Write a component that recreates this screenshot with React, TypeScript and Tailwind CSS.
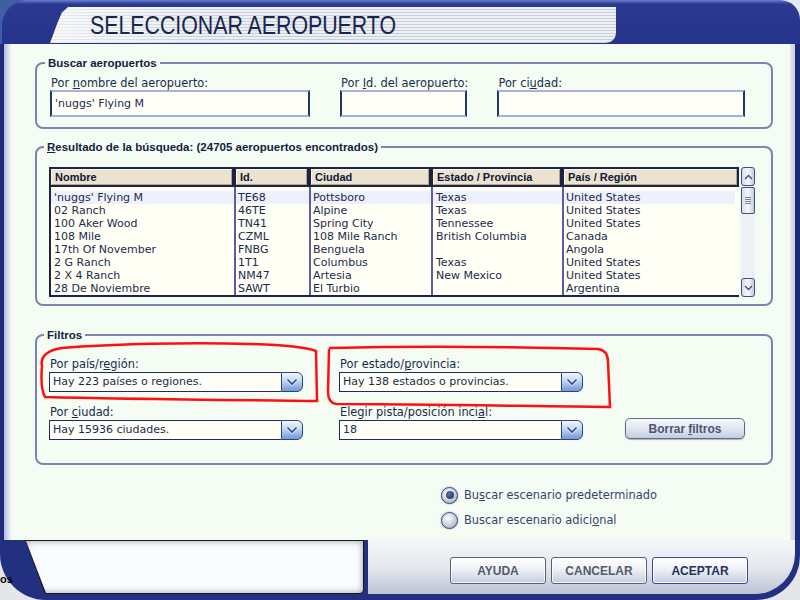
import type { ReactNode } from 'react';

const rows: string[][] = [
  ["'nuggs' Flying M", 'TE68', 'Pottsboro', 'Texas', 'United States'],
  ['02 Ranch', '46TE', 'Alpine', 'Texas', 'United States'],
  ['100 Aker Wood', 'TN41', 'Spring City', 'Tennessee', 'United States'],
  ['108 Mile', 'CZML', '108 Mile Ranch', 'British Columbia', 'Canada'],
  ['17th Of November', 'FNBG', 'Benguela', '', 'Angola'],
  ['2 G Ranch', '1T1', 'Columbus', 'Texas', 'United States'],
  ['2 X 4 Ranch', 'NM47', 'Artesia', 'New Mexico', 'United States'],
  ['28 De Noviembre', 'SAWT', 'El Turbio', '', 'Argentina'],
];

const cols = [
  { title: 'Nombre', w: 'w-[185px]', line: 'border-[#1b2447]', pad: 'pl-[3px]' },
  { title: 'Id.', w: 'w-[75px]', line: 'border-[#5d5c9e]', pad: 'pl-[2px]' },
  { title: 'Ciudad', w: 'w-[122px]', line: 'border-[#5d5c9e]', pad: 'pl-[2px]' },
  { title: 'Estado / Provincia', w: 'w-[131px]', line: 'border-[#5d5c9e]', pad: 'pl-[3px]' },
  { title: 'País / Región', w: 'w-[177px]', line: 'border-[#5d5c9e]', pad: 'pl-[2px]' },
];

function Legend({ children }: { children: ReactNode }) {
  return (
    <legend className="ml-[-5px] px-[3px] font-['Liberation_Sans',Arial,sans-serif] font-bold text-[11.5px] leading-[14px] text-[#14213f]">
      {children}
    </legend>
  );
}

function TextBox({ value, width }: { value?: string; width: string }) {
  return (
    <div
      className={`${width} h-[27px] flex items-center pl-[3px] bg-[#fffff7] border-2 border-t-[#a9b2d4] border-b-[#a9b2d4] border-l-[#1f3866] border-r-[#1f3866] text-[#1b2b4d]`}
    >
      {value}
    </div>
  );
}

function Select({ value, width }: { value: string; width: string }) {
  return (
    <div className={`${width} h-[20px] flex`}>
      <div className="flex-1 flex items-center pl-[3px] bg-[#fffff7] border border-r-0 border-[#1e2b58] text-[#1b2b4d]">
        {value}
      </div>
      <div className="w-[22px] flex items-center justify-center rounded-r-[6px] border border-[#2a4384] bg-[linear-gradient(180deg,#f4f8fe_0%,#c3d6f2_45%,#6f98d6_100%)]">
        <svg width="12" height="8" viewBox="0 0 12 8">
          <path d="M1.5 1.5 L6 6.2 L10.5 1.5" fill="none" stroke="#ffffff" strokeWidth="3.2" strokeLinejoin="round" />
          <path d="M1.5 1.5 L6 6.2 L10.5 1.5" fill="none" stroke="#2b4f98" strokeWidth="1.8" />
        </svg>
      </div>
    </div>
  );
}

function ArrowBtn({ up }: { up?: boolean }) {
  return (
    <div className="h-[19px] flex items-center justify-center rounded-[3px] border border-[#41507a] bg-[linear-gradient(90deg,#d3dced,#f7f9fc_50%,#c2cde0)]">
      <svg width="9" height="6" viewBox="0 0 9 6">
        <path d={up ? 'M1 5 L4.5 1.5 L8 5' : 'M1 1 L4.5 4.5 L8 1'} fill="none" stroke="#3b4c78" strokeWidth="1.3" />
      </svg>
    </div>
  );
}

function ScrollBar() {
  return (
    <div className="w-[14px] ml-[2px] flex flex-col bg-[#eef1f5]">
      <ArrowBtn up />
      <div className="h-[27px] mt-[1px] rounded-[2px] border border-[#41507a] bg-[linear-gradient(90deg,#d6deec,#f6f8fb_50%,#c4cee0)] flex items-center justify-center">
        <div className="w-[6px] h-[7px] bg-[repeating-linear-gradient(180deg,#7a86a0_0px,#7a86a0_1px,transparent_1px,transparent_2px)]" />
      </div>
      <div className="flex-1" />
      <ArrowBtn />
    </div>
  );
}

function Radio({ checked, children }: { checked?: boolean; children: ReactNode }) {
  return (
    <div className="flex items-center gap-[6px] h-[18px]">
      <div className="w-[17px] h-[17px] rounded-full border border-[#34446e] bg-[radial-gradient(circle_at_40%_35%,#ffffff,#c9d0dc_55%,#8893aa)] flex items-center justify-center shadow-[0_0_2px_#8fa6d6]">
        {checked && <div className="w-[8px] h-[8px] rounded-full bg-[radial-gradient(circle_at_40%_35%,#5b6f9e,#1b2b5e)]" />}
      </div>
      <span className="text-[#33456b] text-[11.4px]">{children}</span>
    </div>
  );
}

function Button({ children, primary }: { children: ReactNode; primary?: boolean }) {
  return (
    <div
      className={`h-[27px] w-[96px] flex items-center justify-center rounded-[3px] border ${
        primary ? 'border-[#3b47a8] text-[#27305e]' : 'border-[#5a6070] text-[#555b6b]'
      } bg-[linear-gradient(180deg,#ffffff_0%,#eef1f5_45%,#c6cddb_100%)] shadow-[inset_0_0_0_1px_rgba(255,255,255,0.8)] font-['Liberation_Sans',Arial,sans-serif] font-bold text-[12px]`}
    >
      {children}
    </div>
  );
}

export default function App() {
  return (
    <div className="relative w-[800px] h-[600px] overflow-hidden bg-[#22307f] flex flex-col font-['DejaVu_Sans',Verdana,sans-serif] text-[11px] leading-[14px] text-[#1b2b4d]">
      {/* title bar */}
      <div className="h-[44px] flex bg-[linear-gradient(90deg,#3f5ea6_0%,#3f5ea6_50%,#e5e8ef_50%,#e5e8ef_100%)]">
        <div className="flex-1 ml-[2px] rounded-tl-[26px] rounded-tr-[20px] bg-[linear-gradient(180deg,#6a80cc_0px,#2c3990_4px,#26338a_100%)] flex">
          <div className="ml-[48px] mt-[7px] h-[36px] w-[566px] rounded-br-[10px] [clip-path:polygon(0_100%,8px_40%,12px_15%,18px_0,100%_0,100%_100%)] bg-[linear-gradient(90deg,rgba(255,255,255,0.6),rgba(255,255,255,0)_30%),repeating-linear-gradient(180deg,#eceff3_0px,#eceff3_2px,#c9ced8_2px,#c9ced8_3px)] pl-[40px] pt-[5px]">
            <span className="inline-block origin-left scale-x-[0.82] whitespace-nowrap font-['Liberation_Sans',Arial,sans-serif] text-[26px] leading-none text-[#17264e]">
              SELECCIONAR AEROPUERTO
            </span>
          </div>
        </div>
      </div>

      {/* body */}
      <div className="flex-1 flex min-h-0">
        <div className="w-[12px] bg-[linear-gradient(90deg,#1e2a78_0px,#1e2a78_4px,#aebcdb_4px,#e7edf5_10px,#f5fcf4_12px)]" />
        <div className="flex-1 bg-[#f5fcf4] pl-[23px] pr-[17px] pt-[12px] flex flex-col">
          <fieldset className="border-2 border-[#7c84b2] rounded-[8px] pl-[13px] pt-[6px] pb-[10px]">
            <Legend>Buscar aeropuertos</Legend>
            <div className="flex">
              <div>
                <div className="pl-[1px] text-[11.4px]">Por <u>n</u>ombre del aeropuerto:</div>
                <TextBox width="w-[260px]" value="'nuggs' Flying M" />
              </div>
              <div className="ml-[30px]">
                <div className="pl-[1px] text-[11.4px]">Por <u>I</u>d. del aeropuerto:</div>
                <TextBox width="w-[127px]" />
              </div>
              <div className="ml-[29px]">
                <div className="pl-[1px] text-[11.4px]">Por ci<u>u</u>dad:</div>
                <TextBox width="w-[248px]" />
              </div>
            </div>
          </fieldset>

          <fieldset className="mt-[11px] border-2 border-[#7c84b2] rounded-[8px] pl-[12px] pt-[13px] pb-[7px]">
            <Legend>
              <u>R</u>esultado de la búsqueda: (24705 aeropuertos encontrados)
            </Legend>
            <div className="flex h-[130px]">
              <div className="flex flex-col">
                <div className="flex h-[20px]">
                  {cols.map((c) => (
                    <div key={c.title} className={`${c.w} border-2 border-[#1b2447]`}>
                      <div className="h-full flex items-center pl-[3px] bg-[#ebe2d0] border border-t-[#fbf7ee] border-l-[#fbf7ee] border-b-[#b9a586] border-r-[#b9a586] font-['Liberation_Sans',Arial,sans-serif] font-bold text-[11px] text-[#10183a]">
                        {c.title}
                      </div>
                    </div>
                  ))}
                </div>
                <div className="flex flex-1 bg-[#fffff6] border-b-2 border-[#1b2447]">
                  {cols.map((c, ci) => (
                    <div key={c.title} className={`${c.w} border-l-2 ${c.line} pt-[4px] flex flex-col`}>
                      {rows.map((r, ri) => (
                        <div
                          key={ri}
                          className={`h-[13px] leading-[13px] whitespace-nowrap ${c.pad} ${ri === 0 ? 'bg-[#eef0fb]' : ''} ${
                            ci === 4 && ri === 0 ? 'mr-[4px]' : ''
                          }`}
                        >
                          {r[ci]}
                        </div>
                      ))}
                    </div>
                  ))}
                </div>
              </div>
              <ScrollBar />
            </div>
          </fieldset>

          <fieldset className="mt-[22px] border-2 border-[#7c84b2] rounded-[8px] pl-[12px] pt-[15px] pb-[23px]">
            <Legend>Filtros</Legend>
            <div className="flex">
              <div className="w-[254px]">
                <div className="pl-[1px] text-[11.4px]">Por país/r<u>e</u>gión:</div>
                <div className="mt-[1px]">
                  <Select width="w-[254px]" value="Hay 223 países o regiones." />
                </div>
              </div>
              <div className="ml-[36px] w-[244px]">
                <div className="pl-[1px] text-[11.4px]">Por estado/<u>p</u>rovincia:</div>
                <div className="mt-[1px]">
                  <Select width="w-[244px]" value="Hay 138 estados o provincias." />
                </div>
              </div>
            </div>
            <div className="flex items-end mt-[13px]">
              <div className="w-[254px]">
                <div className="pl-[1px] text-[11.4px]">Por <u>c</u>iudad:</div>
                <div className="mt-[1px]">
                  <Select width="w-[254px]" value="Hay 15936 ciudades." />
                </div>
              </div>
              <div className="ml-[36px] w-[244px]">
                <div className="pl-[1px] text-[11.4px]">Elegir pista/posición inci<u>a</u>l:</div>
                <div className="mt-[1px]">
                  <Select width="w-[244px]" value="18" />
                </div>
              </div>
              <div className="ml-[42px] mb-[1px] w-[120px] h-[21px] flex items-center justify-center rounded-[5px] border border-[#5f6a8a] bg-[linear-gradient(180deg,#f7f9fc_0%,#e3e8f0_50%,#c3cddf_100%)] shadow-[0_1px_1px_rgba(60,70,100,0.4)] font-['Liberation_Sans',Arial,sans-serif] font-bold text-[12px] text-[#4c5570]">
                Borrar <u className="ml-[3px]">f</u>iltros
              </div>
            </div>
          </fieldset>

          <div className="mt-[21px] ml-[406px] flex flex-col gap-[7px]">
            <Radio checked>
              Bu<u>s</u>car escenario predeterminado
            </Radio>
            <Radio>
              Buscar escenario adici<u>o</u>nal
            </Radio>
          </div>
        </div>
        <div className="w-[10px] bg-[linear-gradient(90deg,#e3e7ef_0px,#c9cfdc_5px,#1e2a78_5px)]" />
      </div>

      {/* bottom bar */}
      <div className="relative h-[60px] flex bg-[#e4e6ea]">
        <span className="absolute left-0 top-[32px] font-['Liberation_Sans',Arial,sans-serif] font-bold text-[11px] text-black">
          os
        </span>
        <div className="flex-1 flex bg-[#22307f] rounded-bl-[46px] rounded-br-[44px] pb-[6px] pr-[5px]">
          <div className="w-[25px]" />
          <div className="w-[339px] bg-[#1a1a1a] [clip-path:polygon(0_0,100%_0,100%_100%,20px_100%)] rounded-br-[5px] p-[1px]">
            <div className="h-full bg-[#fbfcfd] [clip-path:polygon(0_0,100%_0,100%_100%,20px_100%)] rounded-br-[4px] shadow-[inset_0_0_7px_rgba(70,80,100,0.55)]" />
          </div>
          <div className="w-[4px]" />
          <div className="flex-1 flex justify-end items-start gap-[5px] pt-[17px] pr-[47px] rounded-br-[40px] bg-[linear-gradient(180deg,#f4f6f8_0%,#e4e8ef_50%,#bcc3d4_100%)]">
            <Button>AYUDA</Button>
            <Button>CANCELAR</Button>
            <Button primary>ACEPTAR</Button>
          </div>
        </div>
      </div>

      {/* red hand-drawn annotations */}
      <svg className="absolute inset-0 pointer-events-none" width="800" height="600" viewBox="0 0 800 600">
        <path
          d="M42 366 C40 356 48 350 62 348 C110 344 190 342 250 344 C285 345 305 347 316 351 L317 401 C230 400 120 399 45 397 C41 390 41 378 42 366"
          fill="none"
          stroke="#ff1010"
          strokeWidth="2.5"
          strokeLinecap="round"
        />
        <path
          d="M330 348 C420 346 520 347 598 349 C606 350 608 356 608 362 L610 407 C520 406 420 404 336 404 C330 403 328 398 328 392 L329 350"
          fill="none"
          stroke="#ff1010"
          strokeWidth="2.5"
          strokeLinecap="round"
        />
      </svg>
    </div>
  );
}
